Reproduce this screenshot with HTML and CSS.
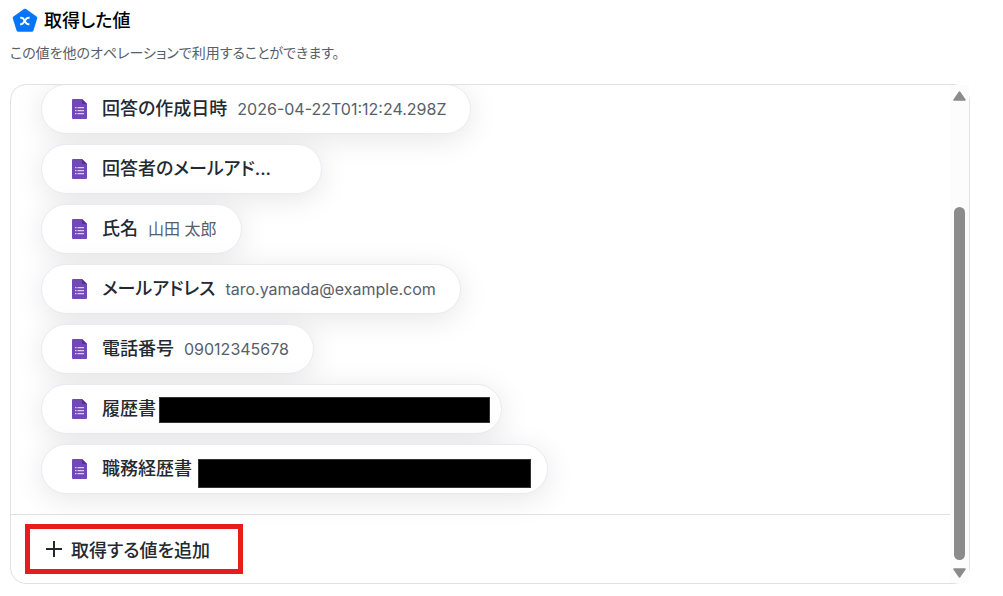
FILE: index.html
```html
<!DOCTYPE html>
<html lang="ja">
<head>
  <meta charset="UTF-8" />
  <meta name="viewport" content="width=device-width, initial-scale=1.0"/>
  <title>取得した値</title>
  <link rel="stylesheet" href="styles.css">
</head>
<body>
  <svg width="0" height="0" class="sprite" aria-hidden="true">
    <symbol id="form-icon" viewBox="0 0 15 20">
      <path d="M1 0H10l5 5v14a1 1 0 0 1-1 1H1a1 1 0 0 1-1-1V1a1 1 0 0 1 1-1z" fill="#7248b9"/>
      <path d="M10 0l5 5h-4a1 1 0 0 1-1-1z" fill="#54318f"/>
      <path d="M3 8h1.500v1.300H3zM5.500 8H12v1.300H5.500zM3 11h1.500v1.300H3zM5.500 11H12v1.300H5.500zM3 14h1.500v1.300H3zM5.500 14H12v1.300H5.500z" fill="#d9cdee"/>
    </symbol>
  </svg>

  <main class="page">
    <header class="heading">
      <svg class="heading-icon" viewBox="0 0 26 26" aria-hidden="true">
        <path d="M13 2.500L23.500 10L19.800 22H6.200L2.500 10z" fill="#0775f7" stroke="#0775f7" stroke-width="3.500" stroke-linejoin="round"/>
        <path d="M8.200 9.800h1.200c1.300 0 1.900.7 2.500 1.800l1.600 2.700c.7 1.200 1.400 1.900 2.700 1.900h1.200M17.600 9.800h-1c-1.400 0-2.200.8-3 1.900l-1.600 2.400c-.8 1.300-1.600 2.100-3 2.100h-.9" fill="none" stroke="#fff" stroke-width="2"/>
      </svg>
      <h1>取得した値</h1>
    </header>
    <p class="description">この値を他のオペレーションで利用することができます。</p>

    <section class="card">
      <div class="card-body">
        <ul class="value-list">
          <li class="pill">
            <svg class="form-icon" aria-hidden="true"><use href="#form-icon"/></svg>
            <span class="label">回答の作成日時</span>
            <span class="value">2026-04-22T01:12:24.298Z</span>
          </li>
          <li class="pill">
            <svg class="form-icon" aria-hidden="true"><use href="#form-icon"/></svg>
            <span class="label label-cut">回答者のメールアド...</span>
          </li>
          <li class="pill">
            <svg class="form-icon" aria-hidden="true"><use href="#form-icon"/></svg>
            <span class="label">氏名</span>
            <span class="value">山田 太郎</span>
          </li>
          <li class="pill">
            <svg class="form-icon" aria-hidden="true"><use href="#form-icon"/></svg>
            <span class="label">メールアドレス</span>
            <span class="value">taro.yamada@example.com</span>
          </li>
          <li class="pill">
            <svg class="form-icon" aria-hidden="true"><use href="#form-icon"/></svg>
            <span class="label">電話番号</span>
            <span class="value">09012345678</span>
          </li>
          <li class="pill">
            <svg class="form-icon" aria-hidden="true"><use href="#form-icon"/></svg>
            <span class="label">履歴書</span>
            <span class="value hidden-value resume"></span>
          </li>
          <li class="pill">
            <svg class="form-icon" aria-hidden="true"><use href="#form-icon"/></svg>
            <span class="label">職務経歴書</span>
            <span class="value hidden-value career"></span>
          </li>
        </ul>
        <div class="card-footer">
          <button type="button" class="add-button">
            <svg class="plus" viewBox="0 0 16 16" aria-hidden="true"><path d="M8 0v16M0 8h16" stroke="#23292f" stroke-width="2"/></svg>
            取得する値を追加
          </button>
        </div>
      </div>
      <div class="scrollbar" aria-hidden="true">
        <svg class="arrow" viewBox="0 0 13 10"><path d="M6.500 1L12 9H1z" fill="#8b8b8b" stroke="#8b8b8b" stroke-width="1.500" stroke-linejoin="round"/></svg>
        <div class="track"><div class="thumb"></div></div>
        <svg class="arrow" viewBox="0 0 13 10"><path d="M6.500 9L12 1H1z" fill="#8b8b8b" stroke="#8b8b8b" stroke-width="1.500" stroke-linejoin="round"/></svg>
      </div>
    </section>
  </main>
</body>
</html>
```
FILE: styles.css
```css
* {
  box-sizing: border-box;
}

body {
  margin: 0;
  background: #fff;
  color: #23292f;
  font-family: Inter, "Noto Sans CJK JP", sans-serif;
  font-feature-settings: "palt";
}

.sprite {
  position: absolute;
}

.page {
  padding: 8px 33px 12px 10px;
}

.heading {
  display: flex;
  align-items: center;
  gap: 6px;
  height: 26px;
  padding-left: 2px;
}

.heading-icon {
  width: 26px;
  height: 26px;
}

h1 {
  margin: 0;
  font-size: 18px;
  font-weight: 500;
  line-height: 26px;
  color: #000;
}

.description {
  margin: 9px 0 21px;
  font-size: 14px;
  line-height: 20px;
  color: #57606a;
}

.card {
  display: flex;
  border: 1px solid #e1e1e3;
  border-radius: 16px;
}

.card-body {
  flex: 1;
  min-width: 0;
  overflow: hidden;
  border-radius: 16px 0 0 16px;
}

.value-list {
  display: flex;
  flex-direction: column;
  align-items: flex-start;
  gap: 10px;
  margin: -1px 0 0;
  padding: 0 20px 20px 30px;
  list-style: none;
}

.pill {
  display: flex;
  align-items: center;
  gap: 10px;
  height: 50px;
  padding: 0 24px 0 30px;
  border: 1px solid #e9ebf0;
  border-radius: 25px;
  background: #fff;
  box-shadow: 0 5px 30px rgba(0, 0, 0, 0.1);
  white-space: nowrap;
}

.form-icon {
  width: 15px;
  height: 20px;
  margin-right: 5px;
}

.label {
  font-size: 18px;
  font-weight: 500;
  line-height: 28px;
}

.label-cut {
  width: 195px;
}

.value {
  font-size: 16px;
  line-height: 28px;
  color: #57606a;
}

/* covered file names */
.hidden-value {
  position: relative;
  height: 28px;
}

.hidden-value::after {
  content: "";
  position: absolute;
  background: #000;
  border: 1px solid #333;
}

.resume {
  width: 311px;
}

.resume::after {
  inset: 2px -13px 0 -7px;
}

.career {
  width: 321px;
}

.career::after {
  inset: 4px -8px -5px -4px;
}

.card-footer {
  padding: 9px 14px;
  border-top: 1px solid #e1e1e3;
}

.add-button {
  display: flex;
  align-items: center;
  gap: 9px;
  height: 50px;
  padding: 0 28px 0 16px;
  border: 5px solid #e81c1c;
  background: #fff;
  color: #23292f;
  font-family: inherit;
  font-size: 18px;
  font-weight: 500;
  font-feature-settings: inherit;
  cursor: pointer;
}

.plus {
  width: 16px;
  height: 16px;
}

.scrollbar {
  display: flex;
  flex-direction: column;
  align-items: center;
  width: 19px;
  padding: 6px 0 5px;
  background: #fcfcfc;
}

.arrow {
  width: 13px;
  height: 10px;
}

.track {
  display: flex;
  flex: 1;
  align-items: flex-end;
  padding-bottom: 8px;
}

.thumb {
  width: 11px;
  height: 77%;
  border-radius: 6px;
  background: #8b8b8b;
}
```
